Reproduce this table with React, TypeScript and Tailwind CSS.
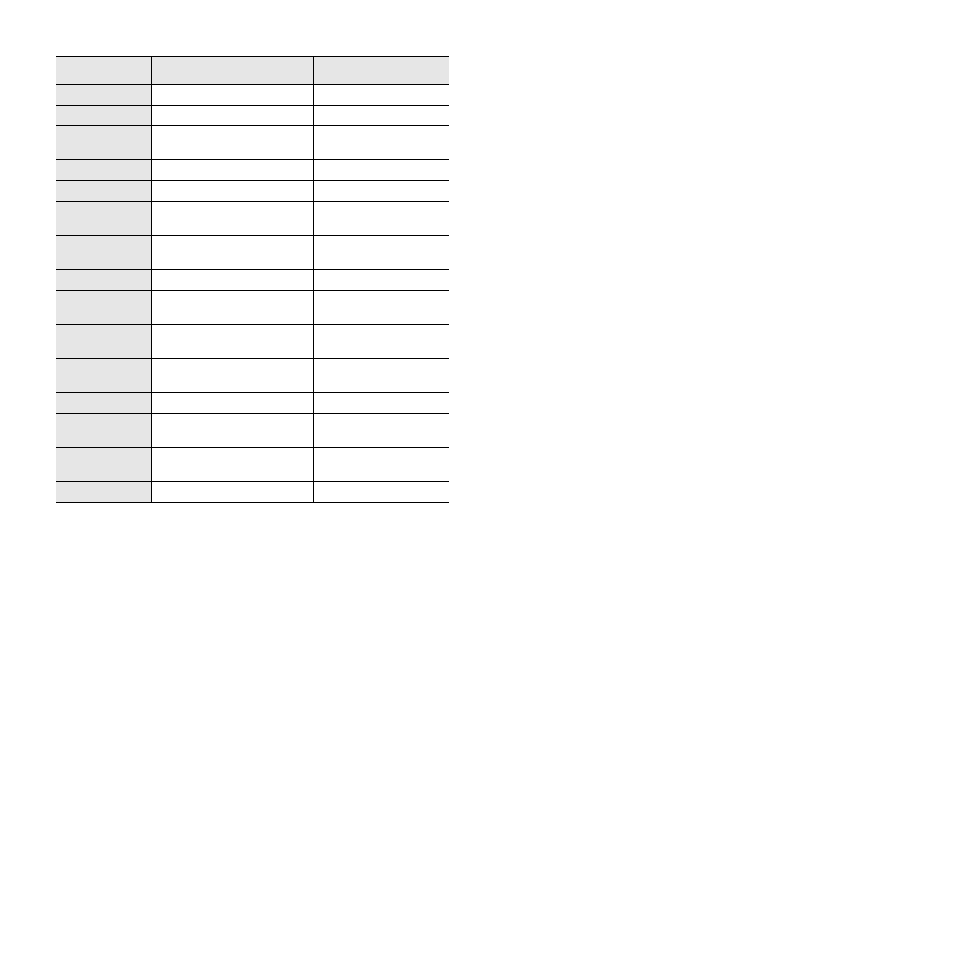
import React from 'react'

// row heights include the 1px bottom rule
const rows = [21, 20, 34, 21, 21, 34, 34, 21, 34, 34, 34, 21, 34, 34, 21]

function Row({ h }: { h: number }) {
    const height = h === 34 ? 'h-[34px]' : h === 20 ? 'h-[20px]' : 'h-[21px]'
    return (
        <div className={`grid grid-cols-[95px_162px_136px] border-b border-black ${height}`}>
            <div className="bg-[#e6e6e6]" />
            <div className="border-l border-black" />
            <div className="border-l border-black" />
        </div>
    )
}

export default function App() {
    return (
        <div className="min-h-[954px] bg-white pt-[56px] pl-[56px] font-['Liberation_Sans',sans-serif]">
            <div className="w-[393px] border-t border-black">
                <div className="grid h-[28px] grid-cols-[95px_162px_136px] border-b border-black bg-[#e6e6e6]">
                    <div />
                    <div className="border-l border-black" />
                    <div className="border-l border-black" />
                </div>
                {rows.map((h, i) => (
                    <Row key={i} h={h} />
                ))}
            </div>
        </div>
    )
}
